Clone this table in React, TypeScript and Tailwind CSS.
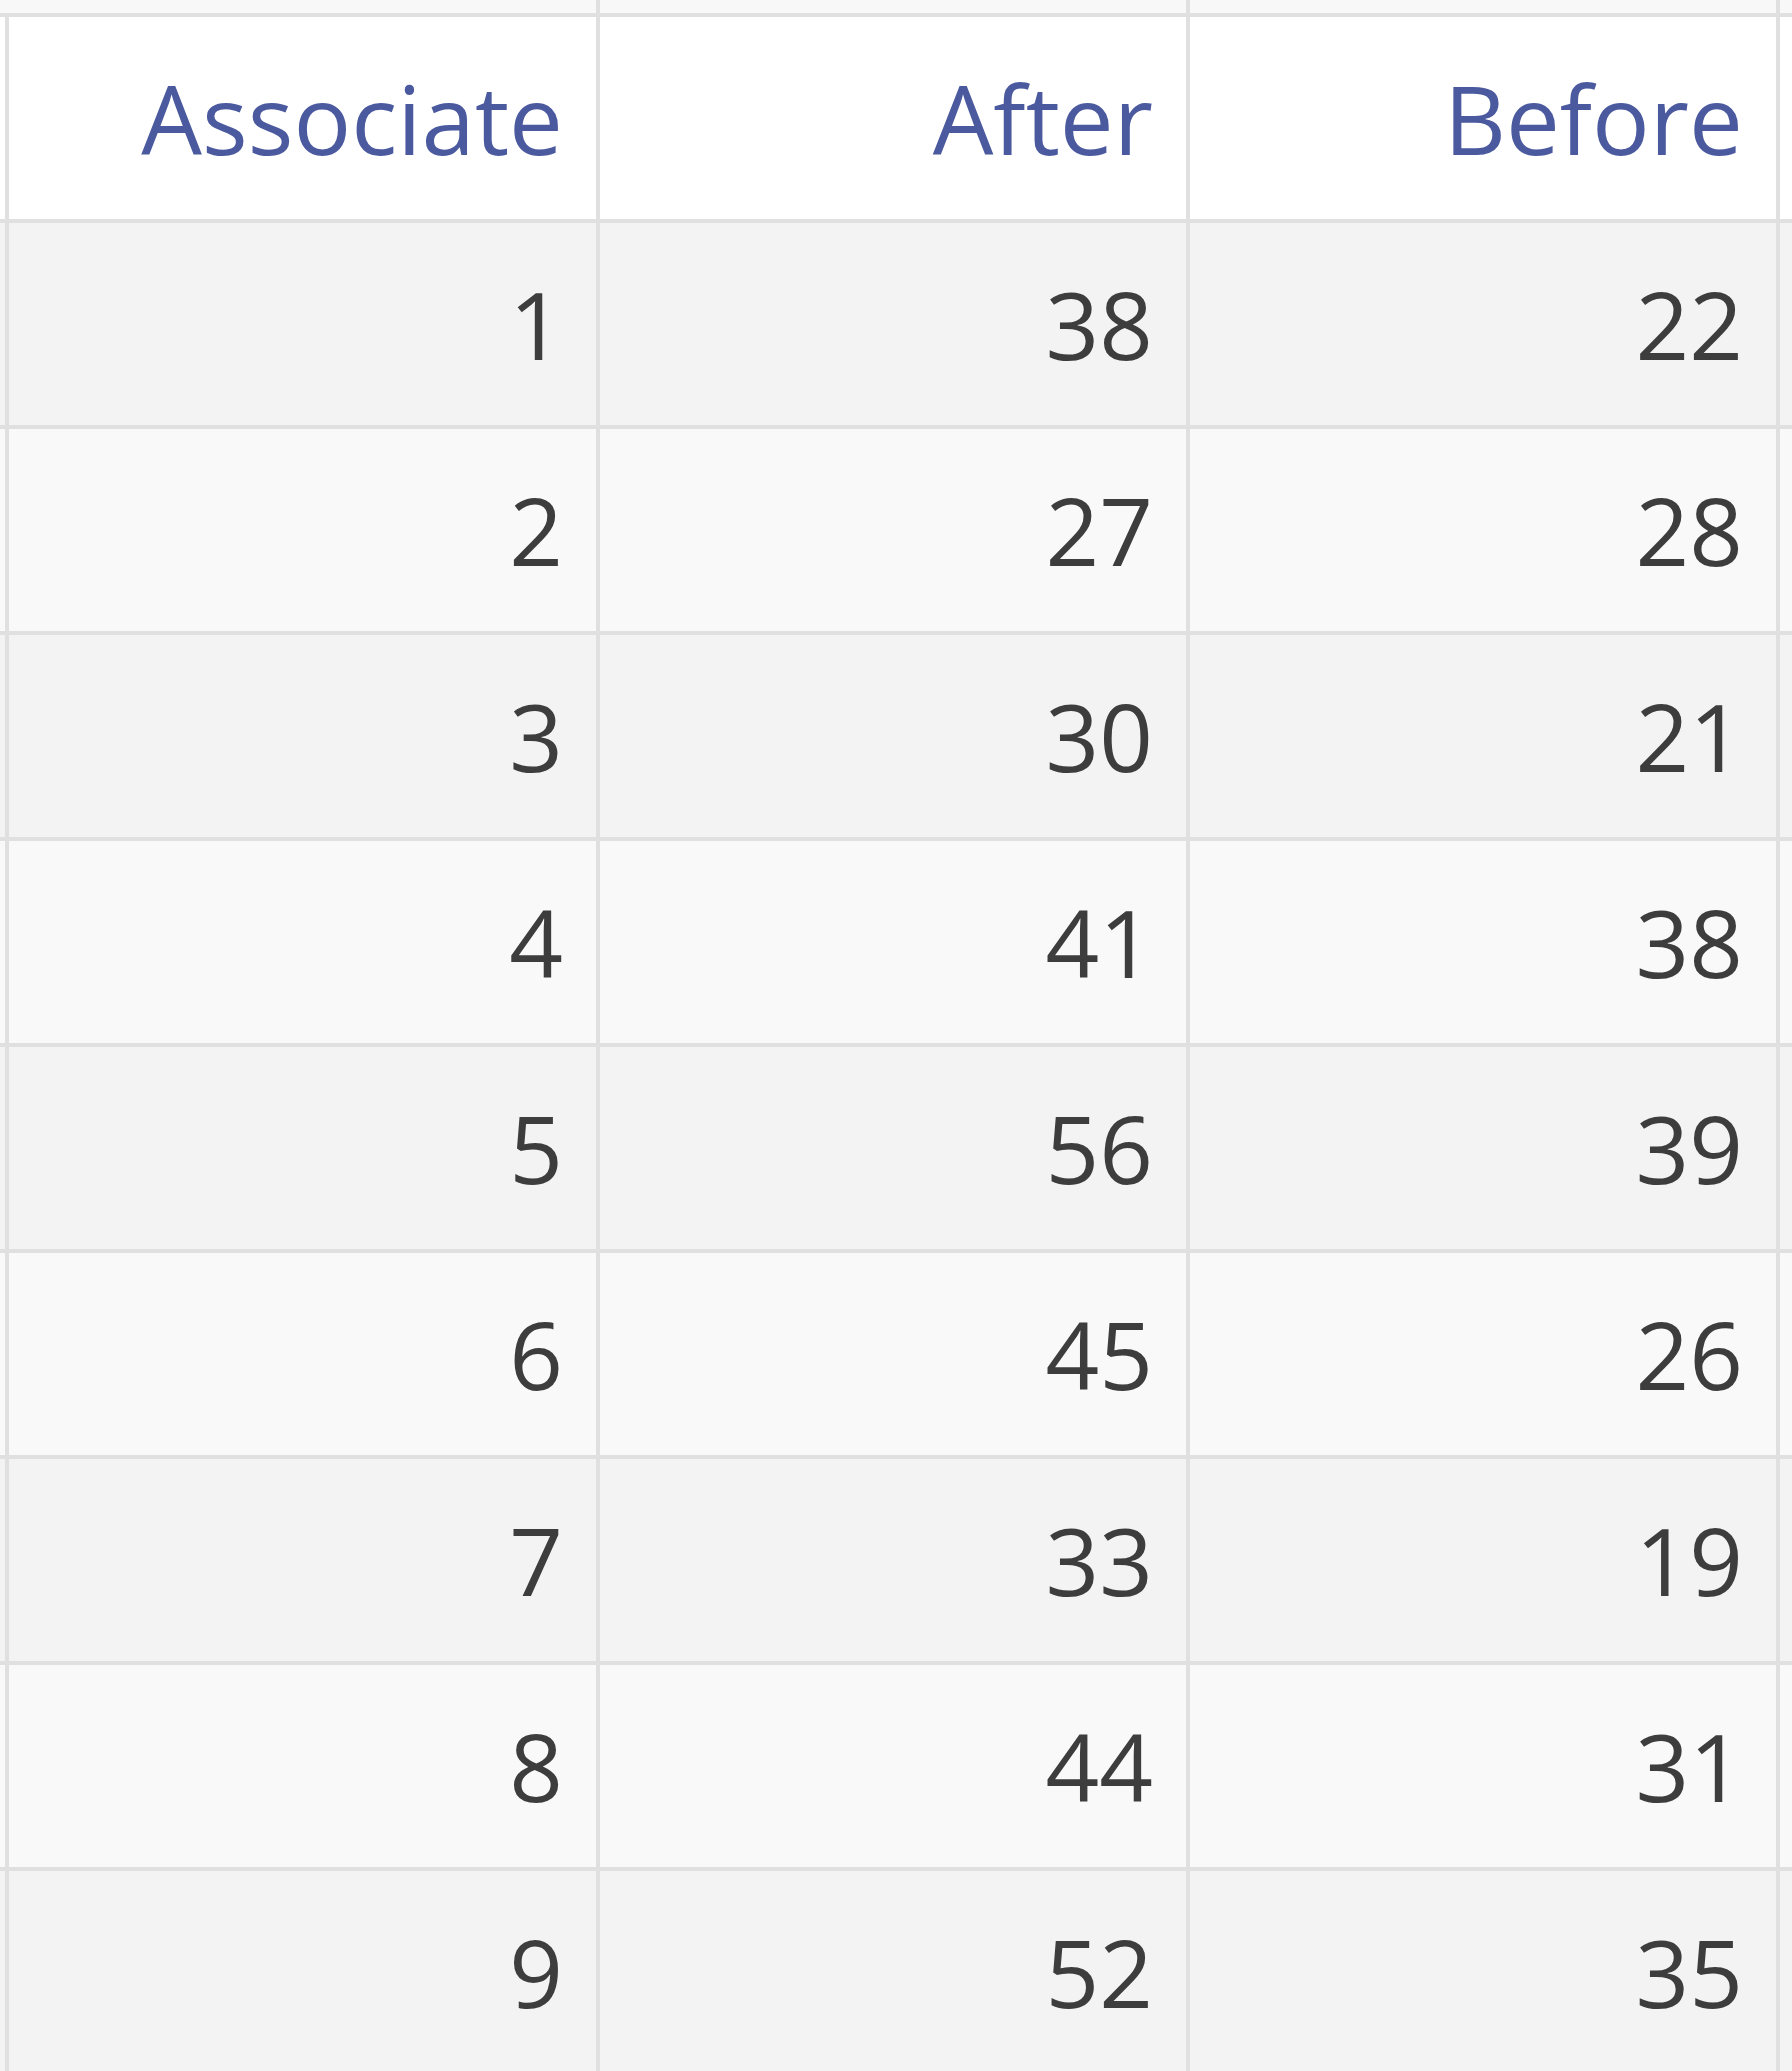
import React from "react";

const rows = [
  [1, 38, 22],
  [2, 27, 28],
  [3, 30, 21],
  [4, 41, 38],
  [5, 56, 39],
  [6, 45, 26],
  [7, 33, 19],
  [8, 44, 31],
  [9, 52, 35],
];

const widths = ["w-[595px]", "w-[590px]", "w-[590px]"];

const App = () => {
  return (
    <div
      className="w-[1792px] h-[2071px] overflow-hidden bg-white"
      style={{ fontFamily: '"Open Sans", "Liberation Sans", sans-serif' }}
    >
      {/* tail of the row above, cut off at the top */}
      <div className="flex h-[17px] bg-[#f8f8f8] border-b-4 border-[#e0e0e0]">
        <div className="w-[9px]" />
        <div className="w-[591px] border-r-4 border-[#e0e0e0]" />
        <div className="w-[590px] border-r-4 border-[#e0e0e0]" />
        <div className="w-[590px] border-r-4 border-[#e0e0e0]" />
        <div className="flex-1" />
      </div>

      <div className="flex h-[206px] bg-white border-b-4 border-[#e0e0e0]">
        <div className="w-[5px]" />
        {["Associate", "After", "Before"].map((h, i) => (
          <div
            key={h}
            className={`${widths[i]} ${i === 0 ? "border-l-4" : ""} border-r-4 border-[#e0e0e0] flex items-center justify-end pr-[33px] text-[96px] text-[#4b5a9f] leading-none`}
          >
            {h}
          </div>
        ))}
        <div className="flex-1" />
      </div>

      {rows.map((r, idx) => (
        <div
          key={idx}
          className={`flex h-[206px] border-b-4 border-[#e0e0e0] ${idx % 2 === 0 ? "bg-[#f3f3f3]" : "bg-[#f9f9f9]"}`}
        >
          <div className="w-[5px]" />
          {r.map((v, i) => (
            <div
              key={i}
              className={`${widths[i]} ${i === 0 ? "border-l-4" : ""} border-r-4 border-[#e0e0e0] flex items-center justify-end pr-[33px] text-[94px] text-[#3d3d3d] leading-none`}
            >
              {v}
            </div>
          ))}
          <div className="flex-1" />
        </div>
      ))}
    </div>
  );
};

export default App;
